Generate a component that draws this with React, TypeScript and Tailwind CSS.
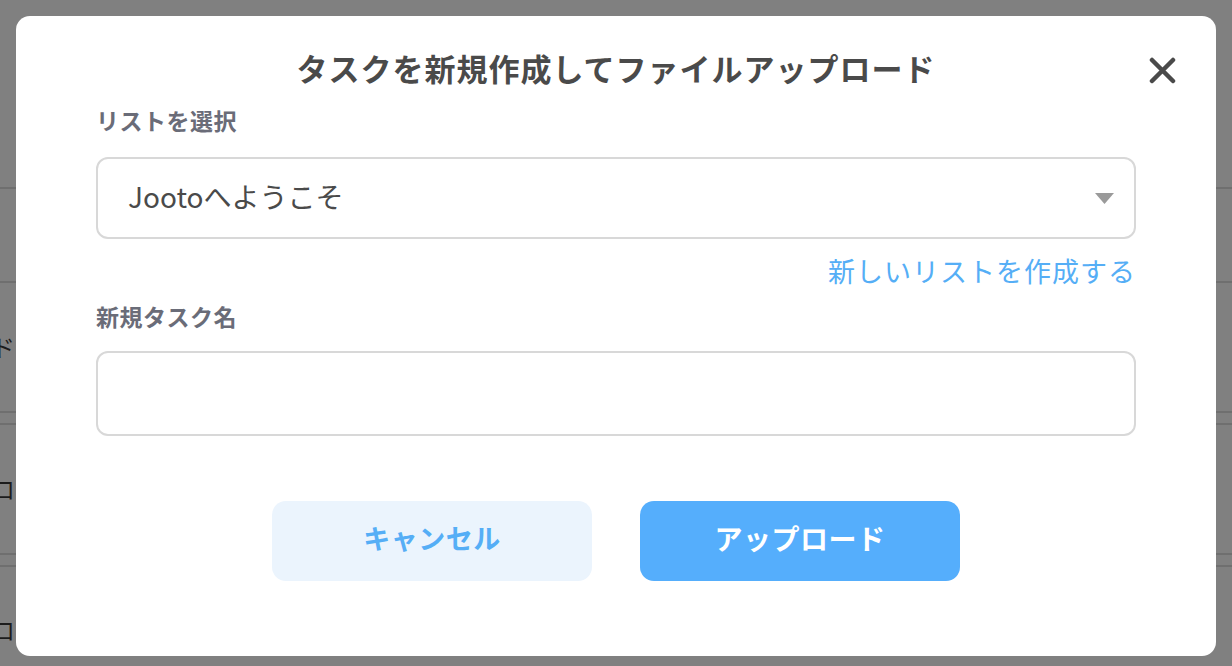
import React from "react";

const FONT = { fontFamily: '"Noto Sans CJK JP", "Noto Sans", sans-serif' };

export default function App() {
  return (
    <div className="relative w-[1232px] h-[666px] overflow-hidden bg-[#808080]" style={FONT}>
      {/* background page (dimmed) */}
      <div className="flex flex-col w-full text-[#1c1c1c]">
        <div className="h-[189px] border-b-2 border-[#6f6f6f]" />
        <div className="h-[94px] border-b-2 border-[#6f6f6f]" />
        <div className="h-[130px] border-b-2 border-[#6f6f6f] flex items-center">
          <span className="ml-[-9px] text-[24px] leading-none">ド</span>
        </div>
        <div className="h-[12px] border-b-2 border-[#6f6f6f]" />
        <div className="h-[130px] border-b-2 border-[#6f6f6f] flex items-center">
          <span className="ml-[-9px] text-[24px] leading-none">ロ</span>
        </div>
        <div className="h-[12px] border-b-2 border-[#6f6f6f]" />
        <div className="h-[130px] flex items-center">
          <span className="ml-[-9px] text-[24px] leading-none mt-[-4px]">ロ</span>
        </div>
      </div>

      {/* modal */}
      <div className="absolute left-[16px] top-[16px] w-[1200px] h-[640px] bg-white rounded-[14px] px-[80px] flex flex-col">
        <div className="mt-[32px] h-[40px] flex items-center justify-center text-[31px] font-bold text-[#4a4a4a] tracking-[1px]">
          タスクを新規作成してファイルアップロード
        </div>
        <button className="absolute right-[40px] top-[41px] w-[27px] h-[27px]">
          <svg viewBox="0 0 27 27" width="27" height="27">
            <path d="M3 3 L24 24 M24 3 L3 24" stroke="#4a4a4a" strokeWidth="4.5" strokeLinecap="round" fill="none" />
          </svg>
        </button>

        <div className="mt-[17px] h-[30px] flex items-center text-[23px] font-bold text-[#6a6c78] tracking-[0.5px]">リストを選択</div>
        <div className="mt-[22px] h-[82px] border-2 border-[#d8d8d8] rounded-[12px] flex items-center justify-between pl-[30px] pr-[20px]">
          <span className="text-[28px] text-[#4a4a4a] mt-[-4px]">Jootoへようこそ</span>
          <svg width="19" height="11" viewBox="0 0 19 11">
            <path d="M0 0 L19 0 L9.5 11 Z" fill="#9a9a9a" />
          </svg>
        </div>
        <div className="mt-[15px] h-[34px] flex items-center justify-end text-[27px] text-[#55aef6] tracking-[1px]">新しいリストを作成する</div>

        <div className="mt-[13px] h-[30px] flex items-center text-[23px] font-bold text-[#6a6c78] tracking-[0.5px]">新規タスク名</div>
        <div className="mt-[20px] h-[85px] border-2 border-[#d8d8d8] rounded-[12px]" />

        <div className="mt-[65px] flex justify-center gap-[48px]">
          <button className="w-[320px] h-[80px] rounded-[14px] bg-[#ebf4fd] text-[#55aef6] text-[27px] font-bold tracking-[0.5px] pb-[6px]">キャンセル</button>
          <button className="w-[320px] h-[80px] rounded-[14px] bg-[#55aefc] text-white text-[28px] font-bold tracking-[0.5px] pb-[6px]">アップロード</button>
        </div>
      </div>
    </div>
  );
}
